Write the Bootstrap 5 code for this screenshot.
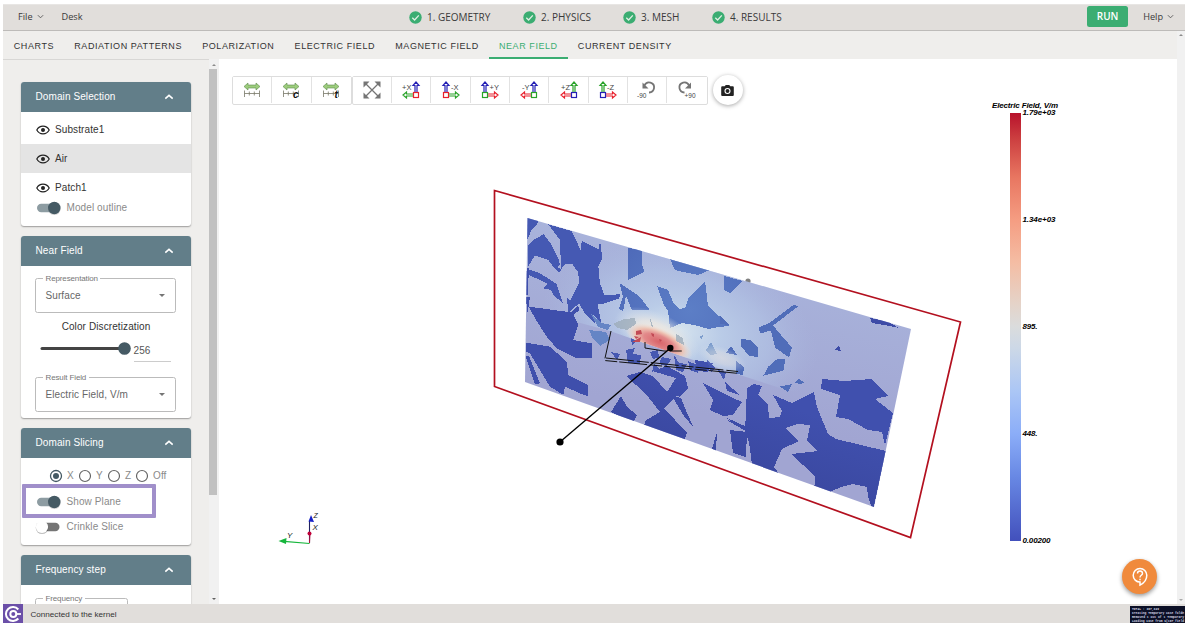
<!DOCTYPE html>
<html lang="en">
<head>
<meta charset="utf-8">
<meta name="viewport" content="width=device-width, initial-scale=1">
<title>Near Field</title>
<link href="https://cdn.jsdelivr.net/npm/bootstrap@5.3.0/dist/css/bootstrap.min.css" rel="stylesheet">
<style>
body{height:100vh;overflow:hidden;background:#fff;font:10px/1.2 "Liberation Sans",Arial,sans-serif;color:#333;padding:4px 3px 0}
svg{display:block;flex:none}
.topbar{height:27px;background:#e1dedb;border-bottom:1px solid #bdbbb9;border-top:1px solid #e8e6e4;font-family:"Open Sans","Noto Sans",sans-serif;font-size:9.2px;color:#3a3a3a;padding:0 11px 2px 15px}
.steps{left:406px;top:0;height:24px;font-size:10px}
.step-item{gap:5px;white-space:nowrap}
.run-btn{width:41px;height:21px;background:#3bad72;color:#fff;font-size:10px;font-weight:600;border-radius:2.5px;padding:0;line-height:21px;border:0}
.tabs-bar{height:28px;background:#efeeec;font-size:9px;letter-spacing:.57px;color:#333;padding-left:.7px}
.tabs-bar .nav-link{padding:0 10.1px;height:28px;line-height:30px;color:#333;border-bottom:2px solid transparent;white-space:nowrap}
.tabs-bar .nav-link.active{color:#3bad72;border-color:#3bad72}
.side{width:206px;background:#efeeec;border-top:1px solid #d8d7d5;padding:22px 18px 0;overflow:hidden;letter-spacing:.1px}
.vscroll{background:#f1f1f1;width:10px}
.thumb{width:8px;height:426px;background:#c1c1c1;margin-right:2px}
.arrow-up,.arrow-down{border:2.5px solid transparent;width:0;height:0}
.arrow-up{border-bottom-color:#8b8b8b;border-top:0}
.arrow-down{border-top-color:#606060;border-bottom:0}
.panel{width:170px;background:#fff;border-radius:3px;box-shadow:0 1px 1.5px rgba(0,0,0,.35);margin-bottom:10px;flex:none;overflow:hidden}
.panel-head{height:30px;background:#627e89;color:#fff;padding:0 17px 0 14.5px}
.dom-row{height:29px;padding-left:15px;gap:5px}
.muted{color:#8a8a8a}
.tog{width:24px;height:14px;flex:none}
.outl{height:35px;border:1px solid #bbb;border-radius:2.5px;margin:0 15px 0 14px;padding:0 10px 0 9.5px;color:#666}
.outl .cap{left:7px;top:-5.5px;font-size:8px;letter-spacing:-.13px;background:#fff;padding:0 2.5px;line-height:10px;color:#777}
.caret{border:3.5px solid transparent;border-top-color:#757575;border-bottom:0}
.hl{left:1px;top:55.5px;width:134px;height:34px;border:4.5px solid #a08fca;border-radius:1px}
.tools{padding:16px 0 0 13px}
.tool-set{border:1.5px solid #ddd;border-radius:2px;background:#fff;height:29px}
.tool-set button{width:39.3px;height:26px;border:0;border-right:1px solid #e2e2e2;background:#fff;padding:0}
.tool-set button:last-child{border-right:0}
.tool-set svg{overflow:visible}
.tool-set text{font:7.5px "Liberation Sans",sans-serif;fill:#444}
.cam{width:30px;height:30px;background:#fff;box-shadow:0 1px 4px rgba(0,0,0,.35);margin-left:5px}
.ax-x{--u:#2420b5;--s:#29a329;--q:#e8202c}
.ax-y{--u:#2420b5;--s:#e8202c;--q:#29a329}
.ax-z{--u:#29a329;--s:#e8202c;--q:#2420b5}
.scale-text text{font:italic bold 8px "Liberation Sans",sans-serif;fill:#000}
.help-fab{right:20px;bottom:10px;width:35px;height:35px;background:#f08a3c;box-shadow:0 2px 4px rgba(0,0,0,.4)}
.status{height:19px;background:#e1dedb;font-size:8.1px;color:#333}
.logo-box{width:20px;height:19px;background:#6b4fa8}
.console{width:55px;height:17px;background:#0c1026;color:#d5d8e5;margin:2px 0 0}
.console text{font:bold 3.3px "Liberation Mono",monospace;fill:#d5d8e5}
</style>
</head>
<body class="d-flex flex-column">
<svg width="0" height="0" class="position-absolute">
  <symbol id="ok" viewBox="0 0 13 13"><circle cx="6.5" cy="6.5" r="6.2" fill="#3bad72"/><path d="M3.3 6.8l2.3 2.2 4.2-4.6" fill="none" stroke="#e1efe5" stroke-width="1.3"/></symbol>
  <symbol id="up" viewBox="0 0 10 6"><path d="M1.3 4.7L5 1.3l3.700 3.400" fill="none" stroke="#fff" stroke-width="1.6"/></symbol>
  <symbol id="down" viewBox="0 0 8 5"><path d="M1 1l3 3 3-3" fill="none" stroke="#555" stroke-width="1"/></symbol>
  <symbol id="eye" viewBox="0 0 14 10"><path d="M.8 5C3.500-.1 10.500-.1 13.200 5 10.500 10.100 3.500 10.100.8 5z" fill="none" stroke="#222" stroke-width="1.200"/><circle cx="7" cy="5" r="2" fill="#222"/></symbol>
  <symbol id="on" viewBox="0 0 24 14"><rect y="2.800" width="22" height="8.500" rx="4.200" fill="#8d9ca2"/><circle cx="17.300" cy="7.700" r="6.400" fill="#000" opacity=".15"/><circle cx="17.300" cy="7" r="6.200" fill="#455a64"/></symbol>
  <symbol id="off" viewBox="-2 0 26 14"><rect x="2" y="2.800" width="20.500" height="8.500" rx="4.200" fill="#757575"/><circle cx="5" cy="7.700" r="6.300" fill="#000" opacity=".25"/><circle cx="5" cy="6.900" r="6.100" fill="#fff"/></symbol>
  <symbol id="rad" viewBox="0 0 14 14"><circle cx="7" cy="7" r="5.500" fill="none" stroke="#666" stroke-width="1.200"/></symbol>
  <symbol id="ruler" viewBox="0 0 20 20"><path d="M2 6.500L6 3v2h8V3l4 3.500L14 10V8H6v2z" fill="#9ccc7c" stroke="#5c8a4c" stroke-width=".6"/><path d="M2.500 10.500v6.500M7.300 11.500v4M12.300 11.500v4M17.500 10.500v6.500M2.500 13.500h15" stroke="#777767" stroke-width=".8" fill="none"/></symbol>
  <symbol id="axL" viewBox="0 0 20 20"><path d="M14 12.500V5.500H12l3-3.500 3 3.500h-2v7" fill="#fff" stroke="var(--u)" stroke-width="1.200"/><path d="M12.500 14H5.500v-2L2 15l3.500 3v-2h7" fill="#fff" stroke="var(--s)" stroke-width="1.200"/><rect x="12.500" y="12.500" width="5" height="5" fill="#fff" stroke="var(--q)" stroke-width="1.200"/></symbol>
  <symbol id="axR" viewBox="0 0 20 20"><path d="M4 12.500V5.500H2L5 2l3 3.500H6v7" fill="#fff" stroke="var(--u)" stroke-width="1.200"/><path d="M7.500 14h7v-2l3.500 3-3.500 3v-2h-7" fill="#fff" stroke="var(--s)" stroke-width="1.200"/><rect x="2.500" y="12.500" width="5" height="5" fill="#fff" stroke="var(--q)" stroke-width="1.200"/></symbol>
</svg>

<header class="topbar d-flex align-items-center position-relative flex-shrink-0">
  <span>File</span><svg class="ms-1" width="7" height="5"><use href="#down"/></svg>
  <span style="margin-left:18px">Desk</span>
  <div class="steps position-absolute d-flex align-items-center">
    <span class="step-item d-flex align-items-center" style="width:114px"><svg width="13" height="13"><use href="#ok"/></svg>1. GEOMETRY</span>
    <span class="step-item d-flex align-items-center" style="width:100px"><svg width="13" height="13"><use href="#ok"/></svg>2. PHYSICS</span>
    <span class="step-item d-flex align-items-center" style="width:89px"><svg width="13" height="13"><use href="#ok"/></svg>3. MESH</span>
    <span class="step-item d-flex align-items-center"><svg width="13" height="13"><use href="#ok"/></svg>4. RESULTS</span>
  </div>
  <button class="btn run-btn ms-auto">RUN</button>
  <span style="margin-left:15px">Help</span><svg class="ms-1" width="7" height="5"><use href="#down"/></svg>
</header>

<div class="d-flex flex-grow-1 overflow-hidden">
  <div class="d-flex flex-column flex-grow-1">
    <ul class="nav tabs-bar flex-nowrap flex-shrink-0">
      <li><a class="nav-link">CHARTS</a></li><li><a class="nav-link">RADIATION PATTERNS</a></li><li><a class="nav-link">POLARIZATION</a></li><li><a class="nav-link">ELECTRIC FIELD</a></li><li><a class="nav-link">MAGNETIC FIELD</a></li><li><a class="nav-link active">NEAR FIELD</a></li><li><a class="nav-link">CURRENT DENSITY</a></li>
    </ul>
    <div class="d-flex flex-grow-1 overflow-hidden">
      <aside class="side d-flex flex-column flex-shrink-0">
        <section class="panel" style="height:144px">
          <div class="panel-head d-flex align-items-center justify-content-between">Domain Selection<svg width="10" height="6"><use href="#up"/></svg></div>
          <div class="dom-row d-flex align-items-center pt-1" style="height:32px"><svg width="14" height="10"><use href="#eye"/></svg>Substrate1</div>
          <div class="dom-row d-flex align-items-center" style="background:#e4e4e4"><svg width="14" height="10"><use href="#eye"/></svg>Air</div>
          <div class="dom-row d-flex align-items-center" style="padding-top:1px"><svg width="14" height="10"><use href="#eye"/></svg>Patch1</div>
          <div class="d-flex align-items-center muted" style="padding-left:15.500px;gap:6px;height:12px"><svg class="tog"><use href="#on"/></svg>Model outline</div>
        </section>
        <section class="panel" style="height:182px">
          <div class="panel-head d-flex align-items-center justify-content-between">Near Field<svg width="10" height="6"><use href="#up"/></svg></div>
          <div class="outl position-relative d-flex align-items-center justify-content-between" style="margin-top:12px"><span class="cap position-absolute">Representation</span>Surface<i class="caret"></i></div>
          <div class="text-center" style="margin-top:7.500px">Color Discretization</div>
          <div class="d-flex" style="margin:9.500px 0 0 18.500px">
            <svg width="94" height="14"><path d="M2 6.500h80" stroke="#444" stroke-width="3" stroke-linecap="round"/><circle cx="84.500" cy="6.500" r="6.300" fill="#455a64"/></svg>
            <div style="width:37px;height:20px;border-bottom:1px solid #ccc;padding-top:3px;color:#555">256</div>
          </div>
          <div class="outl position-relative d-flex align-items-center justify-content-between" style="margin-top:15px"><span class="cap position-absolute">Result Field</span>Electric Field, V/m<i class="caret"></i></div>
        </section>
        <section class="panel position-relative" style="height:117px">
          <div class="panel-head d-flex align-items-center justify-content-between">Domain Slicing<svg width="10" height="6"><use href="#up"/></svg></div>
          <div class="d-flex align-items-center muted" style="margin:11px 0 0 28px">
            <svg width="14" height="14"><circle cx="7" cy="7" r="5.500" fill="none" stroke="#455a64" stroke-width="1.300"/><circle cx="7" cy="7" r="3" fill="#455a64"/></svg><span style="width:15px;padding-left:4px">X</span>
            <svg width="14" height="14"><use href="#rad"/></svg><span style="width:15px;padding-left:4px">Y</span>
            <svg width="14" height="14"><use href="#rad"/></svg><span style="width:14px;padding-left:4px">Z</span>
            <svg width="14" height="14"><use href="#rad"/></svg><span style="padding-left:4px">Off</span>
          </div>
          <div class="d-flex align-items-center muted" style="margin-top:12px;padding-left:15.500px;gap:6px"><svg class="tog"><use href="#on"/></svg>Show Plane</div>
          <div class="d-flex align-items-center muted" style="margin-top:10.500px;padding-left:13.500px;gap:6px"><svg class="tog" style="width:26px"><use href="#off"/></svg>Crinkle Slice</div>
          <div class="hl position-absolute"></div>
        </section>
        <section class="panel" style="height:120px">
          <div class="panel-head d-flex align-items-center justify-content-between">Frequency step<svg width="10" height="6"><use href="#up"/></svg></div>
          <div class="outl position-relative" style="margin-top:13px;width:93px"><span class="cap position-absolute">Frequency</span></div>
        </section>
      </aside>
      <div class="vscroll d-flex flex-column align-items-center flex-shrink-0">
        <i class="arrow-up" style="margin:5px 0 3px"></i><div class="thumb"></div><i class="arrow-down mt-auto mb-1"></i>
      </div>
      <main class="position-relative flex-grow-1 overflow-hidden bg-white">
        <svg class="position-absolute top-0 start-0" width="958" height="545" viewBox="219 59 958 545">
          <defs>
            <linearGradient id="lt" gradientUnits="userSpaceOnUse" x1="650" y1="230" x2="620" y2="400"><stop offset="0" stop-color="#a9b4dc"/><stop offset="1" stop-color="#a1a5d2"/></linearGradient>
            <radialGradient id="dk" gradientUnits="userSpaceOnUse" cx="690" cy="310" r="170"><stop offset="0" stop-color="#5c7ec6"/><stop offset=".45" stop-color="#506dbb"/><stop offset="1" stop-color="#3f50ac"/></radialGradient>
            <linearGradient id="lo" gradientUnits="userSpaceOnUse" x1="650" y1="360" x2="620" y2="450"><stop offset="0" stop-color="#4050ae"/><stop offset="1" stop-color="#39469d"/></linearGradient>
            <radialGradient id="glow"><stop offset="0" stop-color="#d5e3ee"/><stop offset=".3" stop-color="#bccfe9" stop-opacity=".9"/><stop offset=".65" stop-color="#b2c4e5" stop-opacity=".65"/><stop offset="1" stop-color="#aab8df" stop-opacity="0"/></radialGradient>
            <radialGradient id="halo"><stop offset="0" stop-color="#f5eadf"/><stop offset=".5" stop-color="#ece8e2" stop-opacity=".8"/><stop offset="1" stop-color="#d5e2ee" stop-opacity="0"/></radialGradient>
            <radialGradient id="hot"><stop offset="0" stop-color="#d9646a"/><stop offset=".45" stop-color="#e2898a"/><stop offset=".7" stop-color="#eebfae" stop-opacity=".9"/><stop offset="1" stop-color="#eee3d8" stop-opacity="0"/></radialGradient>
            <clipPath id="plane"><path d="M527.500 218L911 329 874 507 525 382z"/></clipPath>
            <clipPath id="above"><path d="M525 200H920V425L780 388 687 358 610 331 525 308z"/></clipPath>
            <linearGradient id="cw" x1="0" y1="0" x2="0" y2="1"><stop offset="0" stop-color="#b8122c"/><stop offset=".06" stop-color="#cc3f40"/><stop offset=".15" stop-color="#e87661"/><stop offset=".25" stop-color="#f59d82"/><stop offset=".35" stop-color="#f4bda4"/><stop offset=".45" stop-color="#e4d4ca"/><stop offset=".5" stop-color="#dadcdd"/><stop offset=".55" stop-color="#ccd8e7"/><stop offset=".65" stop-color="#abc6f5"/><stop offset=".75" stop-color="#8badf8"/><stop offset=".85" stop-color="#6888e4"/><stop offset="1" stop-color="#4250bc"/></linearGradient>
          </defs>
          <circle cx="748" cy="281" r="2.600" fill="#808080"/>
          <g clip-path="url(#plane)">
            <path d="M520 210H915V510H520z" fill="url(#lt)"/>
            <g clip-path="url(#above)"><ellipse cx="680" cy="330" rx="140" ry="85" fill="url(#glow)" transform="rotate(14 680 330)"/></g>
            <!-- upper slice cells -->
            <g fill="url(#dk)" shape-rendering="crispEdges">
              <g transform="translate(485 180) scale(.33333)">
                <path fill="#4559b3" d="M125 112L160 122 155 135 140 150 127 178zM130 195L150 177 176 163 200 195 222 240 225 255 218 262 232 270 222 276 205 260 190 240 150 226 135 250 128 262zM190 133L260 153 275 185 288 212 290 183 342 208 345 180 352 235 340 260 345 310 358 345 405 343 403 355 350 373 338 372 345 410 350 430 325 405 330 430 300 400 282 370 262 388 250 402 246 352 255 362 268 338 282 310 280 278 262 252 240 252 228 268 225 180zM132 268L165 280 215 312 234 370 205 345 198 330 176 325 188 312 160 298 132 285z"/>
                <path fill="#3f4fac" d="M132 380L258 397 280 376 282 392 265 404 280 435 264 480 320 490 322 533 270 533 215 505 185 470 150 415zM122 488L195 500 245 545 250 585 308 615 308 648 285 640 240 620 235 645 195 620 165 570 135 520 122 515zM122 530L132 528 165 610 150 612zM122 350L135 350 128 400zM125 262L132 265 128 345H122z"/>
              </g>
              <path d="M628.500 248l13 2 .500 14 2.500 8-17 8v-20zM619.500 283l20 13.500 10 13-17.500 1-6-15-3 16-4-3 4-12zM657 286l11 4 6 14 5 5 6-1 4-11 16-16 2 16 1 9 22 20-12 1-9 2-15-4-12-2-12 5-2-17-4-6zM670 259l18 5 22 6-12 5-15-3-8-2zM724 276l19 5-13 12-6-3z"/>
              <path fill="#506db9" d="M770 322.500l24-18 4 2-25 19 11 13 8 9-3 10-14-10-4-17-11 3-1-6zM740.500 339l10 1 8 8-1 9-8-1-8-9zM776.500 359.500l9-1-2 12-20 5 5-9zM720 316l9 9-9-1zM726 353l5-7 6 9zM736 361l8 6-1 8-7-1zM780 386.500l12-2.500-4 8zM795 382.500l4-3.500 5 3.500-4 2z"/>
              <path fill="#6585c5" d="M591 314l11 9 9 2-3 5-10-3zM589 330l17 2 4 8-10 6-7-7zM699 337l4-2-1 5z"/>
              <path fill="#3d4ba7" d="M870 318l17 3 12 7-15-3-12-2zM835 349.500l4-4 2 6z"/>
            </g>
            <!-- lower slice cells -->
            <g fill="url(#lo)" shape-rendering="crispEdges">
              <path d="M626 376l14-4 13 4 14 16 10 4-13 12 23 25-3 9-40-14 1-7 15-9-14-18zM611 412l10-16 6 11 10 8-4 8zM672 396l9 2 6 15 7 15-10-12zM652 371l15-5 18 10 3 12-8 9-13-5 9-14zM703 383l30 15 9 4-9 13-10 1-13-6 3-10zM730 430l17 2-1 25-13-4zM712 449l5-17-1 19zM725 417l24 11-3 3zM695 360l18 3-5 9-11-1zM725 382l15 13-13-4z"/>
              <path d="M747 388l7-4 8 2-4 9 10 10 1 13 11-1 2-6-9-16 19 8 22-11 3 15 11 27 8 5 50 12-13 60-5-14-1-10-14-3-12 3-11 5 4 10-20-8 1-18-24-22 27-3-11-10 3-16-13-1-12 4 14 13-17 8-8 18 13 17-20-7-14-5-4-30-4-10z"/>
              <path d="M822 379l22 2 28-2 16 17-13 3 18 14-8 32-3-13-14-2-20-11-12-2 4-22-19-6zM725 419l32 12-8 2z"/>
              <path fill="#4658b2" d="M611 352l9 2-3 6zM626 350l9-2-2 6 8 1-1 9-12-1zM650 352l8-2 1 7-6 2zM662 357l9 2-4 7-8-2zM674 355l5 8 8 1-4 8-7-2zM688 361l9 4 1 8-8-3zM707 360l8 8-4 5zM654 364l6 5-8 3zM718 370l8 2-2 8zM631 338l6 3-5 4z"/>
            </g>
            <!-- field peak at the patch -->
            <g clip-path="url(#above)">
              <ellipse cx="657" cy="335" rx="46" ry="22" fill="url(#halo)" transform="rotate(26 657 335)"/>
              <ellipse cx="659" cy="342" rx="36" ry="14" fill="url(#hot)" transform="rotate(24 659 342)"/>
              <path fill="#9eadba" opacity=".8" shape-rendering="crispEdges" d="M613 324l11-5 11-1 1 6-9 6-9-2zM676 334l7 4 1 7-8-4zM650 317l3 10-2-1z"/>
              <path fill="#7d9dcd" shape-rendering="crispEdges" d="M706 350l5-8 6 12-7 1zM699 337l4-2-1 5z"/>
              <ellipse cx="722" cy="358" rx="26" ry="11" fill="url(#halo)" opacity=".45" transform="rotate(20 722 358)"/>
            </g>
            <path fill="#c24a55" d="M636 331l5-1 1 4-6 1zM641 337l-9 5 8 0zM651 333l3 1v3l-2-1zM659 339l3 1-2 2zM669 345l3 3h-4zM634 336l5 1-3 2z"/>
          </g>
          <path d="M494.500 190.500L960.500 322 910.500 537.500 494.500 386.500z" fill="none" stroke="#b3101f" stroke-width="1.700"/>
          <path d="M611 331l-6.500 29.500 135 13M606 358l132 13.500M645 342v6l19 3h18" fill="none" stroke="#111" stroke-width="1" stroke-dasharray="28 3 12 2"/>
          <path d="M560.500 441.500L670.500 348" stroke="#000" stroke-width="1.400"/><circle cx="560" cy="442" r="3.600"/><circle cx="670.300" cy="348" r="3.200"/>
          <!-- orientation triad -->
          <path d="M309.500 543.500L284 541.300" stroke="#16b63c" stroke-width="1.200"/><path d="M278.500 541l8-3-.5 6z" fill="#16b63c"/>
          <path d="M309.500 543v-22" stroke="#202060" stroke-width="1.100"/><path d="M311 515l3 7-5.500-.5z" fill="#1620c8"/><path d="M309.500 543l.5-10" stroke="#b01040"/><circle cx="309.500" cy="533.500" r="2" fill="#c00038"/>
          <g font-family="Liberation Sans,sans-serif" font-style="italic" font-size="8" fill="#222"><text x="287" y="538">Y</text><text x="312.500" y="530">X</text><text x="313.500" y="518" font-size="7">Z</text></g>
          <!-- colour scale -->
          <rect x="1010" y="113" width="11" height="428" fill="url(#cw)"/>
          <g class="scale-text"><text x="992" y="108" textLength="66">Electric Field, V/m</text><text x="1022.500" y="115" textLength="33">1.79e+03</text><text x="1022.500" y="221.500" textLength="33">1.34e+03</text><text x="1022.500" y="329" textLength="15">895.</text><text x="1022.500" y="436" textLength="15">448.</text><text x="1022.500" y="543" textLength="28">0.00200</text></g>
        </svg>
        <div class="tools d-flex align-items-center position-relative">
          <div class="tool-set d-flex">
            <button><svg class="mx-auto" width="20" height="20"><use href="#ruler"/></svg></button>
            <button><svg class="mx-auto" width="20" height="20"><use href="#ruler"/><text x="12" y="17.500" style="font:italic bold 10px 'Liberation Sans';fill:#111">c</text></svg></button>
            <button><svg class="mx-auto" width="20" height="20"><use href="#ruler"/><text x="13.500" y="17.500" style="font:italic bold 10px 'Liberation Sans';fill:#111">t</text></svg></button>
          </div>
          <div class="tool-set d-flex">
            <button><svg class="mx-auto" width="20" height="20"><path d="M4 4l12 12M16 4L4 16" stroke="#757575" stroke-width="1.300"/><path d="M1.500 1.500h6l-6 6zM18.500 1.500h-6l6 6zM1.500 18.500h6l-6-6zM18.500 18.500h-6l6-6z" fill="#757575"/></svg></button>
            <button class="ax-x"><svg class="mx-auto" width="20" height="20"><use href="#axL"/><text x="1" y="9.500">+X</text></svg></button>
            <button class="ax-x"><svg class="mx-auto" width="20" height="20"><use href="#axR"/><text x="10" y="9.500">-X</text></svg></button>
            <button class="ax-y"><svg class="mx-auto" width="20" height="20"><use href="#axR"/><text x="9.500" y="9.500">+Y</text></svg></button>
            <button class="ax-y"><svg class="mx-auto" width="20" height="20"><use href="#axL"/><text x="3" y="9.500">-Y</text></svg></button>
            <button class="ax-z"><svg class="mx-auto" width="20" height="20"><use href="#axL"/><text x="2" y="9.500">+Z</text></svg></button>
            <button class="ax-z"><svg class="mx-auto" width="20" height="20"><use href="#axR"/><text x="9" y="9.500">-Z</text></svg></button>
            <button><svg class="mx-auto" width="20" height="20"><path d="M7.500 5.500A5 5 0 1 1 12 12.500" fill="none" stroke="#757575" stroke-width="1.800"/><path d="M5.500 2.500v6h6z" fill="#757575"/><text x="0" y="18" style="font-size:6.500px">-90</text></svg></button>
            <button><svg class="mx-auto" width="20" height="20"><path d="M12 5.500A5 5 0 1 0 7.500 12.500" fill="none" stroke="#757575" stroke-width="1.800"/><path d="M14 2.500v6H8z" fill="#757575"/><text x="7.500" y="18" style="font-size:6.500px">+90</text></svg></button>
          </div>
          <button class="btn cam rounded-circle p-0 d-flex align-items-center justify-content-center"><svg width="13" height="11" viewBox="0 0 13 11"><path d="M1.200 1.300h2.500L4.800 0h3.400l1.100 1.300h2.500q1 0 1 1V10q0 1-1 1H1.200q-1 0-1-1V2.300q0-1 1-1z" fill="#222"/><circle cx="6.500" cy="6" r="2.500" fill="#222" stroke="#fff" stroke-width="1.100"/></svg></button>
        </div>
        <button class="btn help-fab rounded-circle position-absolute p-0 d-flex align-items-center justify-content-center"><svg width="18" height="20" viewBox="0 0 18 20"><path d="M9 1.500a6.800 6.800 0 1 0 0 13.600v3c4-2 6.800-5.500 6.800-9.800A6.800 6.800 0 0 0 9 1.500z" fill="none" stroke="#fff" stroke-width="1.500"/><path d="M6.500 6.500c0-3.300 5-3.300 5 0 0 1.800-2.500 1.900-2.500 4M9 11.800v1.500" fill="none" stroke="#fff" stroke-width="1.400"/></svg></button>
      </main>
    </div>
  </div>
  <div class="vscroll d-flex flex-column align-items-center flex-shrink-0" style="width:8px">
    <i class="arrow-up" style="margin-top:3px"></i><i class="arrow-down mt-auto" style="margin-bottom:3px;border-top-color:#aaa"></i>
  </div>
</div>
<footer class="status d-flex flex-shrink-0 align-items-center">
  <div class="logo-box d-flex align-items-center justify-content-center"><svg width="18" height="18" viewBox="0 0 18 18"><path d="M14.300 4.500A7 7 0 1 0 14.300 13.500" fill="none" stroke="#fff" stroke-width="2"/><circle cx="9.300" cy="9" r="3" fill="none" stroke="#fff" stroke-width="2"/><path d="M12 9h5" stroke="#fff" stroke-width="1.800"/></svg></div>
  <span style="margin-left:7.500px;padding-top:3px">Connected to the kernel</span>
  <svg class="console ms-auto" viewBox="0 0 55 17"><text x="2" y="4.200" textLength="27" lengthAdjust="spacingAndGlyphs">TOTAL : 307,329</text><text x="2" y="8.200" textLength="52" lengthAdjust="spacingAndGlyphs">Creating Temporary case folde</text><text x="2" y="12.100" textLength="52" lengthAdjust="spacingAndGlyphs">Removed 1 out of 1 Temporary</text><text x="2" y="16" textLength="52" lengthAdjust="spacingAndGlyphs">Loading case from S(107_field</text></svg>
</footer>
<script src="https://cdn.jsdelivr.net/npm/bootstrap@5.3.0/dist/js/bootstrap.bundle.min.js"></script>
</body>
</html>
